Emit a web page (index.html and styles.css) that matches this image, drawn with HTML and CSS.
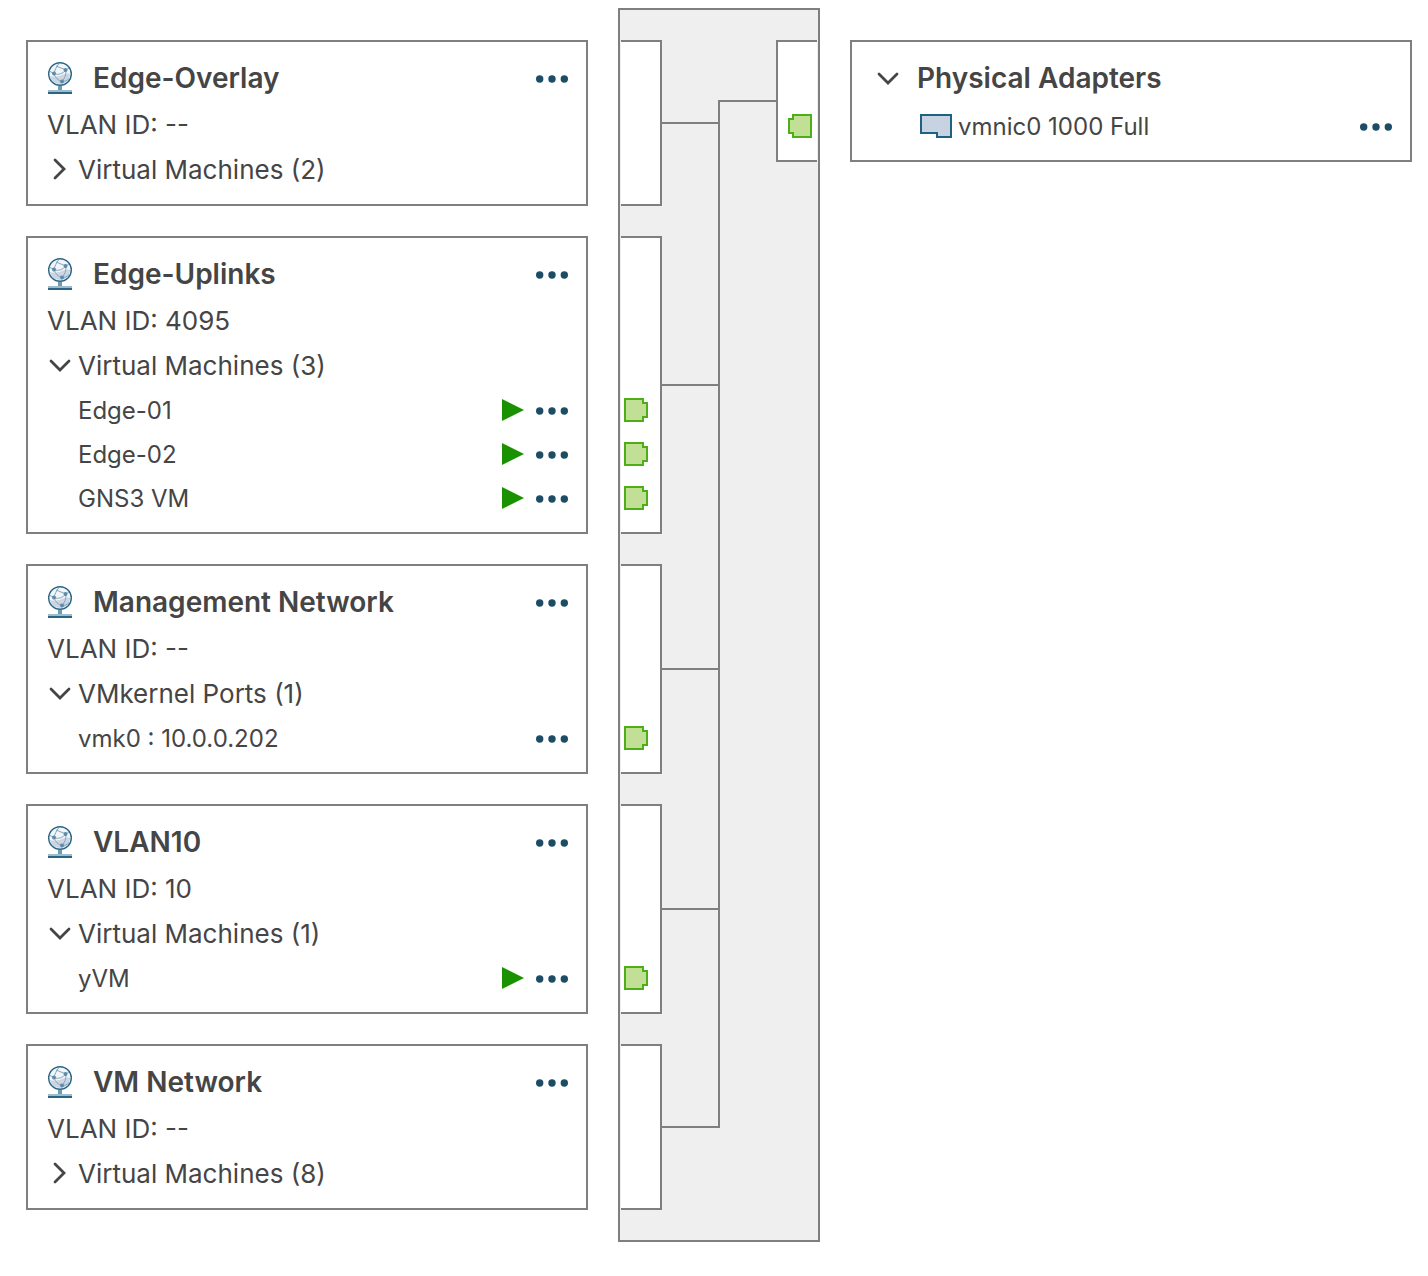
FILE: index.html
```html
<!DOCTYPE html>
<html lang="en">
<head>
<meta charset="utf-8">
<meta name="viewport" content="width=device-width, initial-scale=1">
<title>Virtual switch topology</title>
<link rel="stylesheet" href="styles.css">
</head>
<body>
<svg class="sprite" aria-hidden="true">
  <symbol id="globe" viewBox="0 0 26 32">
    <path d="M11 24h4v4h-4z" fill="#6f9db5"/>
    <path d="M1 28h24v2H1z" fill="#9dbccc"/>
    <path d="M1 30h24v2H1z" fill="#2a6485"/>
    <circle cx="13" cy="12" r="11.300" fill="#f1f5f9" stroke="#2a6485" stroke-width="1.400"/>
    <path d="M3 14c3 1 8 1 12-1 3-1 5-2 8-1 0 6-4 10-10 10-5 0-9-3-10-8z" fill="#cbd6e2"/>
    <path d="M7 11.500C8 8 9 5 12 1.500M9 4l10 4 3-2M7 11.500l-4-2M7 11.500c4 2 9 0 12-3.500M7 11.500c1 4 4 7 8 8M19 8c0 5-1 8-4 11.500M15 19.500c3 0 5-1 7-3" fill="none" stroke="#83a7bd" stroke-width="1"/>
    <circle cx="7" cy="11.500" r="2" fill="#5f8ba8"/>
    <circle cx="18.500" cy="8" r="2" fill="#5f8ba8"/>
    <circle cx="15" cy="19.500" r="2" fill="#5f8ba8"/>
  </symbol>
  <symbol id="chevron-right" viewBox="0 0 26 26"><path d="M8 4l9 9-9 9" fill="none" stroke="#454545" stroke-width="2.800" stroke-linecap="round"/></symbol>
  <symbol id="chevron-down" viewBox="0 0 26 26"><path d="M4 9l9 9 9-9" fill="none" stroke="#454545" stroke-width="2.800" stroke-linecap="round"/></symbol>
  <symbol id="dots" viewBox="0 0 32 8"><g fill="#1d4d65"><circle cx="3.700" cy="4" r="3.700"/><circle cx="16" cy="4" r="3.700"/><circle cx="28.300" cy="4" r="3.700"/></g></symbol>
  <symbol id="play" viewBox="0 0 22 22"><path d="M0 0l22 11L0 22z" fill="#1a9200"/></symbol>
  <symbol id="port" viewBox="0 0 24 24"><path d="M1 1h18v4h4v14h-4v4H1z" fill="#c1e095" stroke="#4eae18" stroke-width="2"/></symbol>
  <symbol id="nic" viewBox="0 0 32 24"><path d="M1 1h30v22H17v-4H1z" fill="#c8d3e1" stroke="#1f6180" stroke-width="2"/></symbol>
</svg>

<main class="topology">
  <section class="card">
    <header class="card-head"><svg class="globe"><use href="#globe"/></svg><h2>Edge-Overlay</h2><button class="more" type="button" aria-label="Edge-Overlay actions"><svg><use href="#dots"/></svg></button></header>
    <p class="vlan">VLAN ID: --</p>
    <button class="toggle" type="button" aria-expanded="false"><svg class="chevron"><use href="#chevron-right"/></svg>Virtual Machines (2)</button>
  </section>

  <section class="card">
    <header class="card-head"><svg class="globe"><use href="#globe"/></svg><h2>Edge-Uplinks</h2><button class="more" type="button" aria-label="Edge-Uplinks actions"><svg><use href="#dots"/></svg></button></header>
    <p class="vlan">VLAN ID: 4095</p>
    <button class="toggle" type="button" aria-expanded="true"><svg class="chevron"><use href="#chevron-down"/></svg>Virtual Machines (3)</button>
    <ul class="items">
      <li><span class="name">Edge-01</span><svg class="play" role="img" aria-label="Running"><use href="#play"/></svg><button class="more" type="button" aria-label="Edge-01 actions"><svg><use href="#dots"/></svg></button></li>
      <li><span class="name">Edge-02</span><svg class="play" role="img" aria-label="Running"><use href="#play"/></svg><button class="more" type="button" aria-label="Edge-02 actions"><svg><use href="#dots"/></svg></button></li>
      <li><span class="name">GNS3 VM</span><svg class="play" role="img" aria-label="Running"><use href="#play"/></svg><button class="more" type="button" aria-label="GNS3 VM actions"><svg><use href="#dots"/></svg></button></li>
    </ul>
  </section>

  <section class="card">
    <header class="card-head"><svg class="globe"><use href="#globe"/></svg><h2>Management Network</h2><button class="more" type="button" aria-label="Management Network actions"><svg><use href="#dots"/></svg></button></header>
    <p class="vlan">VLAN ID: --</p>
    <button class="toggle" type="button" aria-expanded="true"><svg class="chevron"><use href="#chevron-down"/></svg>VMkernel Ports (1)</button>
    <ul class="items">
      <li><span class="name">vmk0 : 10.0.0.202</span><button class="more" type="button" aria-label="vmk0 actions"><svg><use href="#dots"/></svg></button></li>
    </ul>
  </section>

  <section class="card">
    <header class="card-head"><svg class="globe"><use href="#globe"/></svg><h2>VLAN10</h2><button class="more" type="button" aria-label="VLAN10 actions"><svg><use href="#dots"/></svg></button></header>
    <p class="vlan">VLAN ID: 10</p>
    <button class="toggle" type="button" aria-expanded="true"><svg class="chevron"><use href="#chevron-down"/></svg>Virtual Machines (1)</button>
    <ul class="items">
      <li><span class="name">yVM</span><svg class="play" role="img" aria-label="Running"><use href="#play"/></svg><button class="more" type="button" aria-label="yVM actions"><svg><use href="#dots"/></svg></button></li>
    </ul>
  </section>

  <section class="card">
    <header class="card-head"><svg class="globe"><use href="#globe"/></svg><h2>VM Network</h2><button class="more" type="button" aria-label="VM Network actions"><svg><use href="#dots"/></svg></button></header>
    <p class="vlan">VLAN ID: --</p>
    <button class="toggle" type="button" aria-expanded="false"><svg class="chevron"><use href="#chevron-right"/></svg>Virtual Machines (8)</button>
  </section>

  <div class="switch">
    <div class="ports"></div>
    <div class="ports"><svg><use href="#port"/></svg><svg><use href="#port"/></svg><svg><use href="#port"/></svg></div>
    <div class="ports"><svg><use href="#port"/></svg></div>
    <div class="ports"><svg><use href="#port"/></svg></div>
    <div class="ports"></div>
    <div class="link"></div>
    <div class="link"></div>
    <div class="link"></div>
    <div class="link"></div>
    <div class="link"></div>
    <div class="trunk"></div>
    <div class="uplink">
      <div class="uplink-line"></div>
      <div class="uplink-ports"><svg><use href="#port"/></svg></div>
    </div>
  </div>

  <section class="card adapters">
    <h2><button class="adapters-toggle" type="button" aria-expanded="true"><svg class="chevron"><use href="#chevron-down"/></svg>Physical Adapters</button></h2>
    <ul class="items">
      <li><svg class="nic"><use href="#nic"/></svg><span class="name">vmnic0 1000 Full</span><button class="more" type="button" aria-label="vmnic0 actions"><svg><use href="#dots"/></svg></button></li>
    </ul>
  </section>
</main>
</body>
</html>
```
FILE: styles.css
```css
:root {
  --line: #7f7f7f;
  --text: #454545;
  --row: 44px;
}

* { box-sizing: border-box; }

body {
  margin: 0;
  background: #fff;
  color: var(--text);
  font: 26px "Inter", sans-serif;
}

h2, p, ul { margin: 0; padding: 0; }
ul { list-style: none; }
svg { display: block; flex: none; }
.sprite { position: absolute; width: 0; height: 0; }

button {
  padding: 0;
  border: 0;
  background: none;
  color: inherit;
  font: inherit;
  cursor: pointer;
}

.topology {
  display: grid;
  grid-template-columns: minmax(0, 1fr) 202px minmax(0, 1fr);
  grid-template-rows: repeat(5, auto);
  gap: 30px;
  padding: 40px 16px 64px 26px;
}

/* Port group cards */
.card {
  grid-column: 1;
  padding: 11px 18px 12px 19px;
  border: 2px solid var(--line);
}

.card-head {
  display: flex;
  align-items: center;
  height: 50px;
}

.card h2 {
  flex: 1;
  font-size: 28px;
  font-weight: 600;
}

.globe {
  width: 26px;
  height: 32px;
  margin-right: 20px;
}

.vlan { line-height: var(--row); }

.toggle {
  display: flex;
  align-items: center;
  gap: 5px;
  height: 45px;
  padding-bottom: 1px;
}

.chevron { width: 26px; height: 26px; }

.items li {
  display: flex;
  align-items: center;
  height: var(--row);
  padding-left: 31px;
  font-size: 24px;
}

.name { flex: 1; }
.play { width: 22px; height: 22px; margin-right: 12px; }
.more { padding-top: 2px; }
.more svg { width: 32px; height: 8px; }

/* Physical adapters card */
.adapters {
  grid-column: 3;
  grid-row: 1;
  align-self: start;
  padding-left: 23px;
}

.adapters-toggle {
  display: flex;
  align-items: center;
  gap: 16px;
  height: 51px;
  padding-bottom: 1px;
}

.adapters .items li { padding-left: 45px; }
.nic { width: 32px; height: 24px; margin-right: 6px; }

/* Switch body: shares its rows with the cards so ports line up */
.switch {
  grid-column: 2;
  grid-row: 1 / -1;
  display: grid;
  grid-template-columns: 41px 56px 2px 1fr;
  grid-template-rows: subgrid;
  grid-auto-flow: column;
  column-gap: 0;
  margin: -32px 0;
  padding: 30px 1px;
  border: 2px solid var(--line);
  background: #efefef;
}

.ports {
  grid-column: 1;
  display: flex;
  flex-direction: column;
  justify-content: flex-end;
  padding: 0 0 12px 3px;
  border: 2px solid var(--line);
  border-left: 0;
  background: #fff;
}

.ports svg,
.uplink-ports svg {
  width: 24px;
  height: 24px;
  margin: 10px 0;
}

.link {
  grid-column: 2;
  align-self: center;
  height: 2px;
  background: var(--line);
}

.trunk {
  grid-column: 3;
  grid-row: 1 / -1;
  margin: 60px 0 82px;
  background: var(--line);
}

.uplink {
  grid-column: 4;
  grid-row: 1;
  align-self: start;
  display: flex;
  align-items: center;
}

.uplink-line {
  flex: 1;
  height: 2px;
  background: var(--line);
}

.uplink-ports {
  width: 41px;
  padding: 62px 5px 12px 10px;
  border: 2px solid var(--line);
  border-right: 0;
  background: #fff;
}

.uplink-ports svg { transform: scaleX(-1); }
```
